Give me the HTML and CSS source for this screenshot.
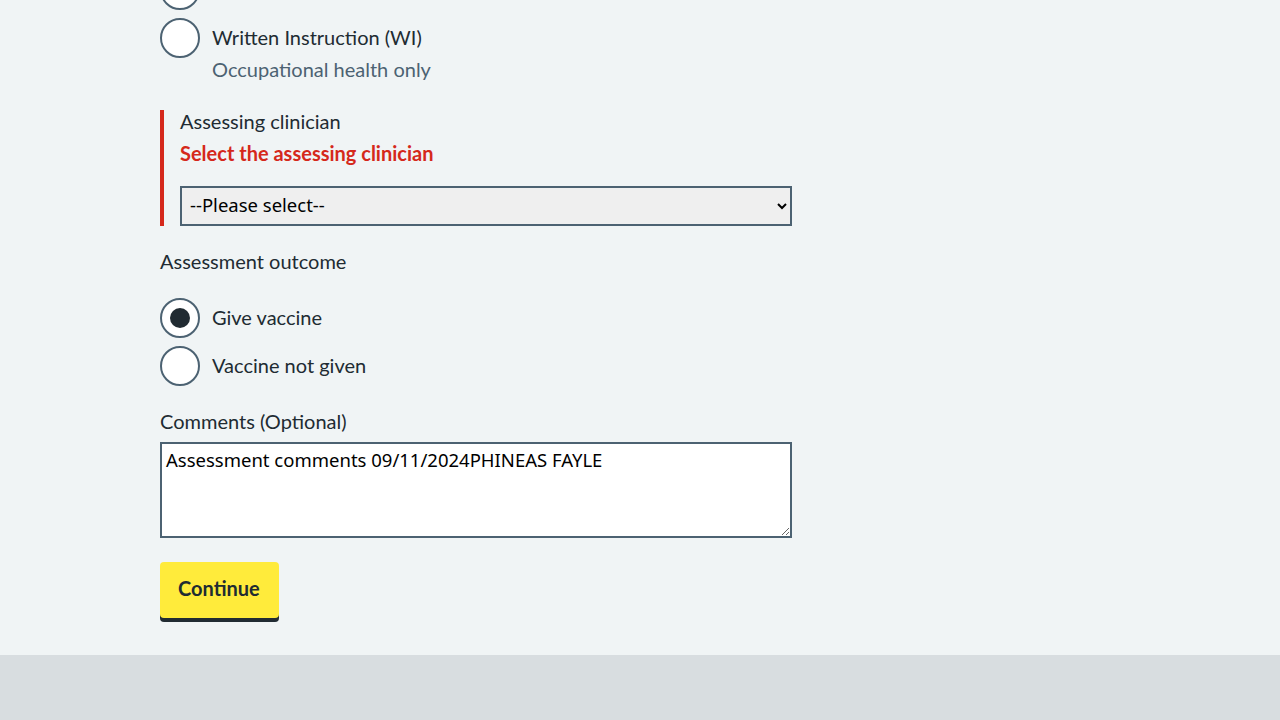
FILE: index.html
```html
<!DOCTYPE html>
<html lang="en">
<head>
<meta charset="utf-8">
<title>Assessment</title>
<link rel="stylesheet" href="styles.css">
</head>
<body>
<main class="page">
  <form class="form">
    <div class="radios radios-top">
      <div class="radio-item">
        <span class="radio-circle"></span>
      </div>
      <div class="radio-item">
        <span class="radio-circle"></span>
        <div class="radio-text">
          <span class="radio-label">Written Instruction (WI)</span>
          <span class="radio-hint">Occupational health only</span>
        </div>
      </div>
    </div>

    <div class="group group-error">
      <label class="label label-tight">Assessing clinician</label>
      <span class="error-message">Select the assessing clinician</span>
      <select class="select">
        <option>--Please select--</option>
      </select>
    </div>

    <fieldset class="fieldset">
      <legend class="label">Assessment outcome</legend>
      <div class="radios">
        <div class="radio-item">
          <span class="radio-circle radio-checked"></span>
          <div class="radio-text"><span class="radio-label">Give vaccine</span></div>
        </div>
        <div class="radio-item">
          <span class="radio-circle"></span>
          <div class="radio-text"><span class="radio-label">Vaccine not given</span></div>
        </div>
      </div>
    </fieldset>

    <div class="group">
      <label class="label label-comments">Comments (Optional)</label>
      <textarea class="textarea" rows="3">Assessment comments 09/11/2024PHINEAS FAYLE</textarea>
    </div>

    <button type="button" class="button">Continue</button>
  </form>
</main>
<footer class="footer"></footer>
</body>
</html>
```

FILE: styles.css
```css
html, body {
  margin: 0;
  padding: 0;
}
body {
  background: #f0f4f5;
  color: #212b32;
  font-family: Lato, "Noto Sans", sans-serif;
  font-size: 20px;
}
.page {
  height: 655px;
  overflow: hidden;
  padding-left: 160px;
  box-sizing: border-box;
}
.form {
  display: flex;
  flex-direction: column;
  align-items: flex-start;
  margin-top: -30px;
}
.radios {
  display: flex;
  flex-direction: column;
  gap: 8px;
}
.radio-item {
  display: flex;
  align-items: flex-start;
  gap: 12px;
  min-height: 40px;
}
.radio-circle {
  flex: none;
  width: 40px;
  height: 40px;
  box-sizing: border-box;
  border: 2px solid #4c6272;
  border-radius: 50%;
  background: #ffffff;
  display: flex;
  align-items: center;
  justify-content: center;
}
.radio-checked::after {
  content: "";
  width: 20px;
  height: 20px;
  border-radius: 50%;
  background: #212b32;
}
.radio-text {
  display: flex;
  flex-direction: column;
  padding-top: 5px;
}
.radio-label {
  line-height: 28px;
}
.radio-hint {
  margin-top: 4px;
  line-height: 28px;
  color: #4c6272;
}
.group {
  display: flex;
  flex-direction: column;
  align-items: flex-start;
}
.group-error {
  margin-top: 27px;
  border-left: 4px solid #d5281b;
  padding-left: 16px;
}
.label {
  line-height: 22px;
  padding: 0;
}
.label-tight {
  margin-bottom: 10px;
}
.error-message {
  color: #d5281b;
  font-weight: 700;
  line-height: 22px;
  margin-bottom: 22px;
}
.select {
  width: 612px;
  height: 40px;
  box-sizing: border-box;
  border: 2px solid #4c6272;
  border-radius: 0;
  background-color: #efefef;
  color: #000000;
  font-family: "Noto Sans", sans-serif;
  font-size: 18.5px;
  padding: 0 4px 3px 4px;
}
.fieldset {
  border: 0;
  margin: 24px 0 0 0;
  padding: 0;
  min-width: 0;
}
.fieldset .label {
  margin-bottom: 26px;
}
.label-comments {
  margin-top: 24px;
  margin-bottom: 10px;
}
.textarea {
  width: 632px;
  height: 96px;
  box-sizing: border-box;
  border: 2px solid #4c6272;
  border-radius: 0;
  background: #ffffff;
  color: #000000;
  font-family: "Noto Sans", sans-serif;
  font-size: 18.5px;
  line-height: 24px;
  padding: 4px;
  margin: 0;
}
.button {
  margin-top: 24px;
  background: #ffeb3b;
  color: #212b32;
  border: 2px solid transparent;
  border-radius: 4px;
  box-shadow: 0 4px 0 #212b32;
  font-family: Lato, "Noto Sans", sans-serif;
  font-weight: 700;
  font-size: 20px;
  line-height: 28px;
  padding: 10px 17px 14px 16px;
  cursor: pointer;
}
.footer {
  height: 65px;
  background: #d8dde0;
}
```
